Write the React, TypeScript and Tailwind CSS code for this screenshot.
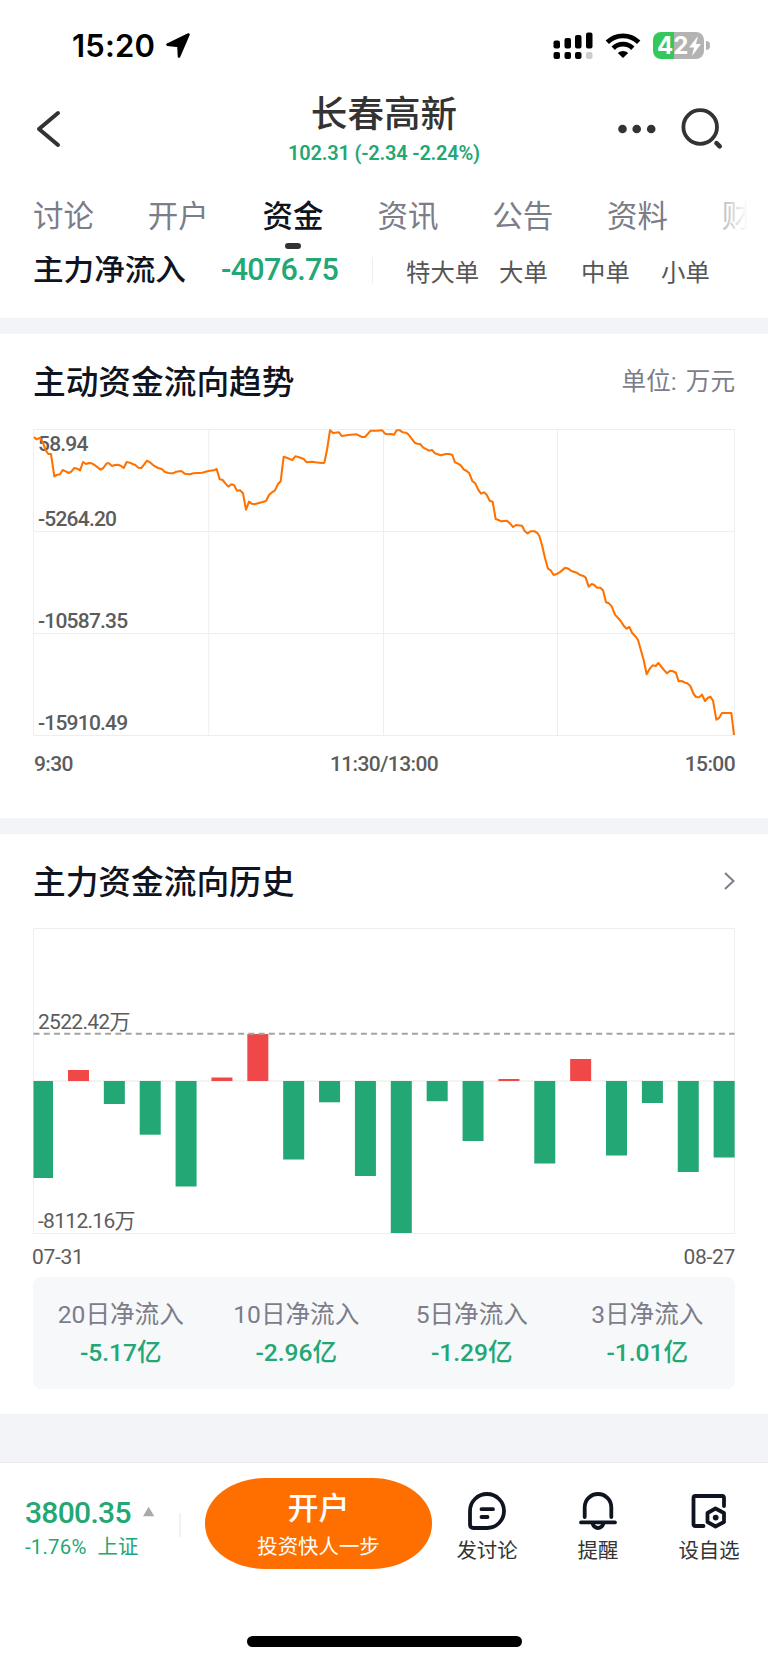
const tabs = ["讨论", "开户", "资金", "资讯", "公告", "资料", "财务"];

const trendPoints =
  "102,81 109,88 120,84 128,96 137,121 145,132 153,132 163,199 170,195 180,193 188,180 197,184 206,189 214,185 223,174 232,176 240,181 249,156 258,162 266,159 275,160 284,165 293,172 302,179 310,174 320,160 327,160 336,168 345,165 354,164 362,167 371,174 380,156 389,158 398,162 406,165 415,173 424,174 432,164 441,152 450,157 460,166 474,174 485,177 495,186 505,189 519,190 529,185 544,183 554,191 570,193 580,190 607,188 625,183 642,181 650,177 659,208 668,210 676,220 685,230 694,223 702,225 711,242 720,241 729,250 738,299 747,275 755,281 764,283 798,273 807,255 816,247 825,241 834,222 842,214 851,140 860,143 869,147 877,150 886,139 895,141 911,147 920,157 936,155 946,157 965,159 973,158 981,120 990,61 999,69 1017,67 1025,78 1045,75 1070,73 1086,81 1095,81 1112,62 1130,62 1147,61 1155,71 1164,73 1174,72 1182,74 1190,61 1200,61 1208,67 1218,68 1225,73 1244,98 1252,101 1260,102 1270,113 1287,122 1296,120 1305,130 1322,136 1338,132 1348,132 1357,135 1365,157 1374,161 1383,167 1391,178 1400,183 1408,190 1417,213 1426,220 1434,238 1443,251 1452,247 1460,254 1469,272 1478,275 1487,327 1495,330 1504,334 1520,332 1530,340 1539,351 1548,345 1566,347 1574,363 1583,370 1591,364 1604,364 1612,369 1618,378 1626,405 1635,444 1644,476 1652,481 1661,495 1670,492 1679,487 1696,473 1705,476 1714,483 1730,488 1740,495 1751,498 1757,503 1766,530 1775,522 1783,525 1791,533 1801,533 1809,541 1818,577 1827,580 1835,589 1845,614 1862,633 1871,647 1880,656 1888,651 1897,670 1908,681 1914,690 1931,750 1940,793 1950,775 1958,766 1967,768 1975,759 1992,780 2001,790 2010,782 2020,784 2028,789 2036,814 2045,813 2055,818 2062,820 2071,828 2081,852 2088,861 2097,862 2106,854 2115,873 2123,864 2131,860 2139,872 2149,929 2157,924 2166,909 2194,909 2202,975";

// bar lengths in px, positive = inflow
const bars = [
  -97, 11, -23, -53.7, -105.5, 3.5, 47, -78.5, -21.3, -95, -152, -20.2, -60, 2, -82.5, 22, -74.5, -22, -91, -76.5,
];

const totals = [
  { label: "20日净流入", value: "-5.17亿" },
  { label: "10日净流入", value: "-2.96亿" },
  { label: "5日净流入", value: "-1.29亿" },
  { label: "3日净流入", value: "-1.01亿" },
];

const StatusBar = () => (
  <div className="h-[86px] flex items-center justify-between pl-[72px] pr-[58px] pt-[5px]">
    <div className="flex items-center gap-[10px] text-black">
      <span className="font-[Inter] font-semibold text-[31px] leading-none tracking-[0.2px]">15:20</span>
      <svg className="w-[26px] h-[26px]" viewBox="0 0 26 26">
        <path
          d="M23.5 1.5 L14 23.5 L13.5 13 L2.5 11.7 Z"
          fill="black"
          stroke="black"
          strokeWidth="2.6"
          strokeLinejoin="round"
        />
      </svg>
    </div>
    <div className="flex items-center">
      <svg className="w-[40px] h-[28px]" viewBox="0 0 40 28">
        <rect x="0.5" y="8.5" width="6.5" height="8" rx="2" />
        <rect x="11.5" y="6" width="6.5" height="10.5" rx="2" />
        <rect x="22" y="3" width="6.5" height="13.5" rx="2" />
        <rect x="33" y="0.5" width="6.5" height="16" rx="2" />
        <rect x="0.5" y="20" width="6.5" height="7" rx="2" />
        <rect x="11.5" y="20" width="6.5" height="7" rx="2" />
        <rect x="22" y="20" width="6.5" height="7" rx="2" />
        <rect x="33" y="20" width="6.5" height="7" rx="2" fill="#ccc" />
      </svg>
      <svg className="w-[36px] h-[28px] ml-[12px]" viewBox="0 0 36 28">
        <g fill="none" stroke="black" strokeWidth="4.8">
          <path d="M2.3 10.2 A22.5 22.5 0 0 1 33.7 10.2" />
          <path d="M8.2 16.2 A14 14 0 0 1 27.8 16.2" />
        </g>
        <path d="M12.8 21 A7.5 7.5 0 0 1 23.2 21 L18 26 Z" />
      </svg>
      <div className="relative ml-[12px] w-[51px] h-[27px] rounded-[8px] overflow-hidden bg-[linear-gradient(to_right,#35c759_21px,#b3b3b3_21px)] flex items-center pl-[4px] text-white">
        <span className="font-[Inter] font-bold text-[24px] leading-none">42</span>
        <svg className="absolute left-[36px] top-[4px] w-[12px] h-[20px]" viewBox="0 0 12 20">
          <path d="M9 0 L0 11.5 H5 L3 20 L12 8 H7 Z" fill="white" />
        </svg>
      </div>
      <div className="ml-[2px] w-[4px] h-[9px] rounded-r-full bg-[#b3b3b3]" />
    </div>
  </div>
);

const Header = () => (
  <div className="h-[98px] grid grid-cols-[200px_1fr_200px] text-[#333]">
    <svg className="ml-[34px] mt-[23px] w-[30px] h-[40px]" viewBox="0 0 30 40" fill="none" stroke="currentColor">
      <path d="M24 4 L5 20 L24 36" strokeWidth="4" strokeLinecap="round" strokeLinejoin="round" />
    </svg>
    <div className="flex flex-col items-center pt-[7px]">
      <h1 className="text-[36.6px] leading-[44px] font-medium">长春高新</h1>
      <p className="mt-[4px] h-[24px] leading-[24px] text-[20px] font-semibold tracking-[-0.2px] text-[#22a775] whitespace-nowrap">
        102.31 (-2.34 -2.24%)
      </p>
    </div>
    <svg className="ml-[42px] mt-[18px] w-[120px] h-[50px]" viewBox="610 104 120 50">
      <g fill="#333">
        <circle cx="622.5" cy="129" r="4.3" />
        <circle cx="636.7" cy="129" r="4.3" />
        <circle cx="651.2" cy="129" r="4.3" />
      </g>
      <circle cx="700.2" cy="127" r="16.8" fill="none" stroke="#333" strokeWidth="3.8" />
      <path d="M716.5 143.2 L719.7 146.4" stroke="#333" strokeWidth="4.6" strokeLinecap="round" />
    </svg>
  </div>
);

const Tabs = () => (
  <div className="relative h-[72px] pl-[33px] pt-[11px] flex gap-[53.8px] overflow-hidden text-[30.5px] leading-[44px] text-[#7b7d88]">
    {tabs.map((tab) => (
      <div key={tab} className="w-[61px] shrink-0 flex flex-col items-center whitespace-nowrap">
        <span className={tab === "资金" ? "font-medium text-[#0f1421]" : ""}>{tab}</span>
        {tab === "资金" && <span className="mt-[4px] w-[16px] h-[6px] rounded-full bg-[#333]" />}
      </div>
    ))}
    <div className="absolute right-0 top-0 h-full w-[60px] bg-[linear-gradient(to_right,rgba(255,255,255,0.2),white_40px)]" />
  </div>
);

const NetInflow = () => (
  <div className="h-[62px] overflow-hidden flex items-start pl-[33px]">
    <span className="w-[188px] -mt-[8px] text-[30.6px] leading-[44px] font-medium text-[#0f1421]">主力净流入</span>
    <span className="w-[151px] -mt-[8px] text-[30.5px] leading-[44px] font-medium tracking-[-0.7px] text-[#22a775]">
      -4076.75
    </span>
    <span className="mt-px w-px h-[26px] bg-[#eee]" />
    <div className="-mt-[3px] ml-[33px] flex text-[24.4px] leading-[40px] text-[#555]">
      <span className="w-[93px]">特大单</span>
      <span className="w-[82px]">大单</span>
      <span className="w-[80px]">中单</span>
      <span>小单</span>
    </div>
  </div>
);

const Trend = () => (
  <section className="h-[484px] px-[33px]">
    <div className="h-[95px] flex items-center justify-between">
      <h2 className="mt-[2px] text-[32.7px] font-medium leading-[48px] text-[#0f1421]">主动资金流向趋势</h2>
      <span className="text-[24.6px] leading-[36px] [word-spacing:3px] text-[#7b7d8a]">单位: 万元</span>
    </div>
    <div className="relative h-[307px] text-[21px] font-medium leading-[24px] tracking-[-0.8px] text-[#5c5c5c]">
      <svg className="absolute inset-0 w-[702px] h-[307px] overflow-visible" viewBox="99 57 2106 921" fill="none">
        <g stroke="#eeeeee" strokeWidth="3">
          <rect x="100.5" y="58.5" width="2103" height="918" />
          <path d="M100 364.5 H2204 M100 670.5 H2204 M626.5 58 V976 M1150.5 58 V976 M1672.5 58 V976" />
        </g>
      </svg>
      <span className="absolute left-[5px] top-[3px]">58.94</span>
      <span className="absolute left-[5px] top-[78px]">-5264.20</span>
      <span className="absolute left-[5px] top-[180px]">-10587.35</span>
      <span className="absolute left-[5px] top-[282px]">-15910.49</span>
      <svg className="absolute inset-0 w-[702px] h-[307px] overflow-visible" viewBox="99 57 2106 921" fill="none">
        <polyline points={trendPoints} stroke="#ff7200" strokeWidth="6.2" strokeLinejoin="round" />
      </svg>
    </div>
    <div className="mt-[16px] grid grid-cols-3 text-[21px] font-medium leading-[24px] tracking-[-0.6px] text-[#5c5c5c]">
      <span className="pl-px">9:30</span>
      <span className="text-center">11:30/13:00</span>
      <span className="text-right">15:00</span>
    </div>
  </section>
);

const History = () => (
  <section className="h-[580px] px-[33px]">
    <div className="h-[94px] flex items-center justify-between">
      <h2 className="mt-[3px] text-[32.7px] font-medium leading-[48px] text-[#0f1421]">主力资金流向历史</h2>
      <svg className="w-[12px] h-[18px]" viewBox="0 0 12 18" fill="none">
        <path d="M2 1 L10.5 9 L2 17" stroke="#7b7d8a" strokeWidth="2" />
      </svg>
    </div>
    <div className="relative h-[306px] border border-[#eee] text-[21px] leading-[24px] tracking-[-0.7px] text-[#5c5c5c]">
      <svg className="absolute -left-px -top-px w-[702px] h-[306px]" viewBox="0 0 702 306">
        <path d="M0 153 H702" stroke="#f3f3f3" strokeWidth="2" />
        {bars.map((v, i) => (
          <rect
            key={i}
            x={i === 0 ? 0.5 : i * 35.87 - 0.9}
            y={v > 0 ? 153 - v : 153}
            width={i === 0 ? 19.5 : 21}
            height={Math.abs(v)}
            fill={v > 0 ? "#f04848" : "#22a775"}
          />
        ))}
        <path d="M0.5 105.8 H701.5" stroke="#a3a3a3" strokeWidth="2" strokeDasharray="6 4.23" />
      </svg>
      <span className="absolute left-[4px] top-[81px]">2522.42万</span>
      <span className="absolute left-[4px] top-[280px]">-8112.16万</span>
    </div>
    <div className="mt-[11px] h-[32px] flex justify-between text-[21px] leading-[24px] tracking-[-0.3px] text-[#5c5c5c]">
      <span className="-ml-px">07-31</span>
      <span>08-27</span>
    </div>
    <div className="h-[112px] rounded-[8px] bg-[#f7f8fa] grid grid-cols-4 text-center pt-[20px]">
      {totals.map((item) => (
        <div key={item.label}>
          <p className="text-[24.6px] leading-[36px] text-[#7b7d8a]">{item.label}</p>
          <p className="mt-px text-[24.6px] leading-[38px] font-medium text-[#22a775]">{item.value}</p>
        </div>
      ))}
    </div>
  </section>
);

const BottomBar = () => (
  <footer className="h-[200px] relative flex text-[#333]">
    <div className="w-[154px] pl-[25px] pt-[32px] text-[#22a775] whitespace-nowrap">
      <div className="flex items-center leading-[36px]">
        <span className="text-[30px] font-medium tracking-[-0.7px]">3800.35</span>
        <svg className="ml-[12px] -mt-[3px] w-[13px] h-[11px]" viewBox="0 0 13 11">
          <path d="M6.5 0 L13 11 H0 Z" fill="#aaa" />
        </svg>
      </div>
      <div className="flex gap-[11px] text-[20.4px] leading-[32px]">
        <span className="tracking-[0.2px]">-1.76%</span>
        <span>上证</span>
      </div>
    </div>
    <div className="ml-[25px] mt-[50px] w-[2px] h-[24px] bg-[#f2f2f2]" />
    <button className="ml-[24px] mt-[15px] w-[227px] h-[91px] rounded-[60px/45px] bg-[#ff6f00] text-white flex flex-col items-center">
      <span className="mt-[9px] text-[31px] leading-[44px] font-medium">开户</span>
      <span className="text-[20.4px] leading-[32px]">投资快人一步</span>
    </button>
    <div className="absolute left-[432px] top-[27px] grid grid-cols-[110px_112px_110px] text-[20.4px] leading-[30px] text-center">
      <div className="flex flex-col items-center">
        <svg className="w-[40px] h-[40px]" viewBox="0 0 40 40" fill="none" stroke="#0f1421" strokeWidth="3.8" strokeLinecap="round">
          <path d="M20 4 A17 17 0 0 1 20 38 H6.5 Q3 38 3 34.5 V21 A17 17 0 0 1 20 4 Z" />
          <path d="M14.5 19.2 H26 M14.5 27 H20.5" />
        </svg>
        <span className="mt-[6px]">发讨论</span>
      </div>
      <div className="flex flex-col items-center">
        <svg className="w-[40px] h-[40px]" viewBox="0 0 40 40" fill="none" stroke="#0f1421" strokeWidth="3.8" strokeLinecap="round">
          <path d="M6.7 27 V17.3 A13.3 13.3 0 0 1 33.3 17.3 V27" />
          <path d="M3 32.4 H37 M14.5 33.5 Q16 38 20 38 Q24 38 25.5 33.5" />
        </svg>
        <span className="mt-[6px]">提醒</span>
      </div>
      <div className="flex flex-col items-center">
        <svg className="w-[40px] h-[40px]" viewBox="0 0 40 40" fill="none" stroke="#0f1421" strokeWidth="3.8" strokeLinecap="round" strokeLinejoin="round">
          <path d="M35 16 V8 Q35 6 33 6 H6.5 Q4.5 6 4.5 8 V34 Q4.5 36 6.5 36 H14.500" />
          <path d="M26.5 18.5 L35 23 V32 L26.500 36.500 L18.5 32 V23 Z" />
          <circle cx="26.7" cy="27.6" r="2.9" fill="#0f1421" stroke="none" />
        </svg>
        <span className="mt-[6px]">设自选</span>
      </div>
    </div>
    <div className="absolute left-[247px] top-[173px] w-[275px] h-[11px] rounded-full bg-black" />
  </footer>
);

export default function App() {
  return (
    <div className="w-[768px] h-[1663px] overflow-hidden bg-white font-[Roboto,'Noto_Sans_CJK_SC',sans-serif]">
      <StatusBar />
      <Header />
      <Tabs />
      <NetInflow />
      <div className="h-[16px] bg-[#f3f4f8]" />
      <Trend />
      <div className="h-[16px] bg-[#f3f4f8]" />
      <History />
      <div className="h-[49px] bg-[#f3f4f8] border-b border-[#e9eaee]" />
      <BottomBar />
    </div>
  );
}
